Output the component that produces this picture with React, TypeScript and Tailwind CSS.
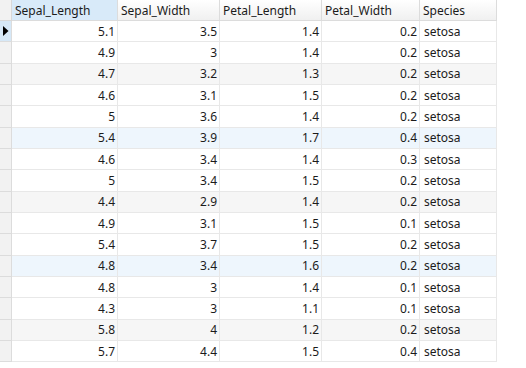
import React from 'react';

const rows: [string, string, string, string, string][] = [
  ['5.1', '3.5', '1.4', '0.2', 'setosa'],
  ['4.9', '3', '1.4', '0.2', 'setosa'],
  ['4.7', '3.2', '1.3', '0.2', 'setosa'],
  ['4.6', '3.1', '1.5', '0.2', 'setosa'],
  ['5', '3.6', '1.4', '0.2', 'setosa'],
  ['5.4', '3.9', '1.7', '0.4', 'setosa'],
  ['4.6', '3.4', '1.4', '0.3', 'setosa'],
  ['5', '3.4', '1.5', '0.2', 'setosa'],
  ['4.4', '2.9', '1.4', '0.2', 'setosa'],
  ['4.9', '3.1', '1.5', '0.1', 'setosa'],
  ['5.4', '3.7', '1.5', '0.2', 'setosa'],
  ['4.8', '3.4', '1.6', '0.2', 'setosa'],
  ['4.8', '3', '1.4', '0.1', 'setosa'],
  ['4.3', '3', '1.1', '0.1', 'setosa'],
  ['5.8', '4', '1.2', '0.2', 'setosa'],
  ['5.7', '4.4', '1.5', '0.4', 'setosa'],
];

const cols = [
  { name: 'Sepal_Length', w: 'w-[106px]' },
  { name: 'Sepal_Width', w: 'w-[102px]' },
  { name: 'Petal_Length', w: 'w-[102px]' },
  { name: 'Petal_Width', w: 'w-[98px]' },
  { name: 'Species', w: 'w-[77px]' },
];

function rowBg(i: number) {
  const n = i + 1;
  if (n % 6 === 0) return 'bg-[#eef6fd]';
  if (n % 6 === 3) return 'bg-[#f6f6f6]';
  return 'bg-white';
}

export default function App() {
  return (
    <div
      className="w-[526px] h-[368px] overflow-hidden bg-white text-[12px] text-[#1b1b1b]"
      style={{ fontFamily: '"Noto Sans", "Open Sans", sans-serif' }}
    >
      {/* header */}
      <div className="flex h-[21px]">
        <div className="w-[12px] shrink-0 border-r border-b border-[#d8d8d8] bg-[#f2f2f2]" />
        {cols.map((c, i) => (
          <div
            key={c.name}
            className={`${c.w} shrink-0 flex items-center pl-[3px] pt-[1px] border-r border-b border-[#dcdcdc] leading-none ${
              i === 0 ? 'bg-[#d8eaf9]' : 'bg-gradient-to-b from-white to-[#f0f0f0]'
            }`}
          >
            {c.name}
          </div>
        ))}
        <div className="flex-1 bg-white" />
      </div>

      {/* rows */}
      {rows.map((r, i) => (
        <div key={i} className="flex h-[21.33px]">
          <div
            className={`w-[12px] shrink-0 flex items-center border-r border-b border-[#dcdcdc] ${
              i === 0 ? 'bg-[#d6e8f7]' : 'bg-[#f2f2f2]'
            }`}
          >
            {i === 0 && (
              <svg width="11" height="12" viewBox="0 0 11 12" className="block">
                <path d="M3 1 L8.5 6 L3 11 Z" fill="#000" />
              </svg>
            )}
          </div>
          {r.map((v, j) => (
            <div
              key={j}
              className={`${cols[j].w} shrink-0 flex items-center pt-[1px] border-r border-b border-[#e8e8e8] leading-none ${rowBg(i)} ${
                j === 4 ? 'pl-[4px]' : 'justify-end pr-[2px]'
              }`}
            >
              {v}
            </div>
          ))}
          <div className="flex-1 bg-white" />
        </div>
      ))}
    </div>
  );
}
